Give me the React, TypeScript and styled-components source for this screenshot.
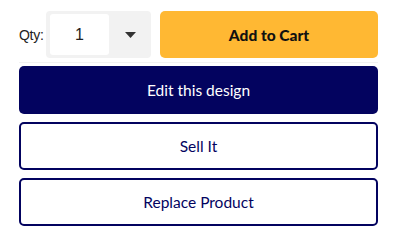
import styled, { createGlobalStyle } from "styled-components";

const GlobalStyle = createGlobalStyle`
  html, body {
    margin: 0;
    padding: 0;
    background: #ffffff;
  }
  body {
    font-family: "Lato", "Liberation Sans", sans-serif;
  }
`

const navy = "#03035f";

const Panel = styled.div`
  width: 359px;
  padding: 11px 0 0 19px;
  display: flex;
  flex-direction: column;
`

const TopRow = styled.div`
  display: flex;
  align-items: center;
  height: 47px;
  padding-bottom: 4px;
  margin-bottom: 3px;
  border-bottom: 1px solid #f2f2f2;
`

const QtyLabel = styled.span`
  width: 27px;
  font-family: "Liberation Sans", Arial, sans-serif;
  font-size: 14px;
  letter-spacing: -0.3px;
  color: #222;
`

const QtySelect = styled.div`
  width: 105px;
  height: 47px;
  box-sizing: border-box;
  padding: 3px 0 3px 4px;
  display: flex;
  align-items: stretch;
  background: #f2f2f2;
  border-radius: 4px;
`

const QtyValue = styled.div`
  width: 59px;
  display: flex;
  align-items: center;
  justify-content: center;
  background: #ffffff;
  border-radius: 3px;
  font-family: "Liberation Sans", Arial, sans-serif;
  font-size: 16px;
  color: #222;
`

const Caret = styled.div`
  flex: 1;
  display: flex;
  align-items: center;
  justify-content: center;
`

const Button = styled.button<{ $variant: "cart" | "solid" | "outline" }>`
  height: ${(p) => (p.$variant === "cart" ? "47px" : "48px")};
  box-sizing: border-box;
  border-radius: 5px;
  font-family: "Lato", "Liberation Sans", sans-serif;
  font-size: 15.5px;
  cursor: pointer;
  display: flex;
  align-items: center;
  justify-content: center;
  background: ${(p) =>
    p.$variant === "cart" ? "#ffb833" : p.$variant === "solid" ? navy : "#ffffff"};
  color: ${(p) => (p.$variant === "cart" ? "#111" : p.$variant === "solid" ? "#fff" : navy)};
  font-weight: ${(p) => (p.$variant === "cart" ? 900 : 400)};
  border: ${(p) => (p.$variant === "outline" ? `2px solid ${navy}` : "none")};
`

const CartButton = styled(Button)`
  flex: 1;
  margin-left: 9px;
`

const Stack = styled.div`
  display: flex;
  flex-direction: column;
  gap: 8px;
`

export default function App() {
  return (
    <>
      <GlobalStyle />
      <Panel>
        <TopRow>
          <QtyLabel>Qty:</QtyLabel>
          <QtySelect>
            <QtyValue>1</QtyValue>
            <Caret>
              <svg width="11" height="6" viewBox="0 0 11 6">
                <path d="M0 0h11L5.5 6z" fill="#333" />
              </svg>
            </Caret>
          </QtySelect>
          <CartButton $variant="cart">Add to Cart</CartButton>
        </TopRow>
        <Stack>
          <Button $variant="solid">Edit this design</Button>
          <Button $variant="outline">Sell It</Button>
          <Button $variant="outline">Replace Product</Button>
        </Stack>
      </Panel>
    </>
  );
}
